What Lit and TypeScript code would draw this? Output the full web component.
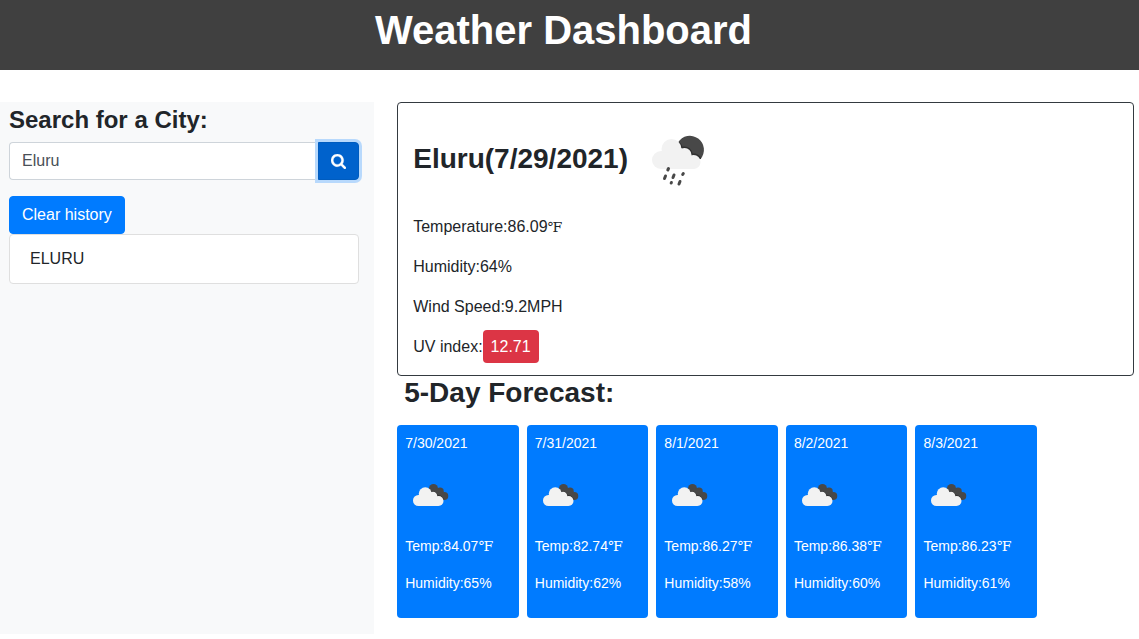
import { LitElement, html, css } from "lit";
import { customElement, property, state } from "lit/decorators.js";

interface Day {
  date: string;
  temp: string;
  humidity: string;
}

@customElement("forecast-card")
class ForecastCard extends LitElement {
  @property({ attribute: false }) day!: Day;

  static styles = css`
    :host {
      display: block;
      box-sizing: border-box;
      padding: 8px;
      border-radius: 4px;
      background: #007bff;
      color: #fff;
      font-size: 14px;
      line-height: 21px;
    }
    p {
      height: 21px;
      margin: 0 0 16px;
    }
    .date {
      margin: 0 0 16px;
      font-size: 14px;
      font-weight: 400;
    }
    .icon {
      display: block;
      width: 50px;
      height: 50px;
      margin-bottom: 16px;
    }
    .unit {
      font-family: "DejaVu Serif", serif;
      font-size: 14px;
      line-height: 1;
    }
  `;

  render() {
    return html`
      <h4 class="date">${this.day.date}</h4>
      <svg class="icon" viewBox="0 0 100 100" role="img" aria-label="Broken clouds">
        <g fill="#484848">
          <circle cx="57" cy="37" r="9" />
          <circle cx="70" cy="42.500" r="7.500" />
          <circle cx="78.500" cy="52" r="8" />
          <path d="M52 42L60 36L72 42L80 50L80 59H66Z" />
        </g>
        <path d="M52 43Q62 42 65 51Q74 50 77.500 60" fill="none" stroke="#303030" stroke-width="2" />
        <g fill="#f2f2f2">
          <circle cx="27" cy="61" r="11" />
          <circle cx="40.500" cy="47.500" r="13" />
          <circle cx="56" cy="52" r="8.500" />
          <circle cx="67" cy="62" r="10" />
          <path d="M27 50L57 48L67 72H27Z" />
        </g>
      </svg>
      <p>Temp:${this.day.temp}<span class="unit">℉</span></p>
      <p>Humidity:${this.day.humidity}</p>
    `;
  }
}

@customElement("app-root")
class AppRoot extends LitElement {
  @state() private history = ["ELURU"];

  private days: Day[] = [
    { date: "7/30/2021", temp: "84.07", humidity: "65%" },
    { date: "7/31/2021", temp: "82.74", humidity: "62%" },
    { date: "8/1/2021", temp: "86.27", humidity: "58%" },
    { date: "8/2/2021", temp: "86.38", humidity: "60%" },
    { date: "8/3/2021", temp: "86.23", humidity: "61%" },
  ];

  static styles = css`
    :host {
      display: block;
      background: #fff;
      color: #212529;
      font: 16px/24px "Liberation Sans", Arial, sans-serif;
    }
    * {
      box-sizing: border-box;
    }
    h1,
    h2,
    h3,
    p,
    ul {
      margin: 0;
    }
    .banner {
      padding: 6px 12px 16px 0;
      background: #404040;
      color: #fff;
      text-align: center;
    }
    .banner h1 {
      font-size: 40px;
      line-height: 48px;
    }
    .layout {
      display: grid;
      grid-template-columns: 33% minmax(0, 1fr);
      column-gap: 23px;
      padding: 32px 5px 0 0;
    }
    .sidebar {
      padding: 4px 15px 16px 9px;
      background: #f8f9fa;
    }
    .sidebar h2 {
      margin-bottom: 8px;
      font-size: 24px;
      line-height: 28px;
    }
    .search {
      display: flex;
      margin-bottom: 16px;
    }
    .field {
      flex: 1;
      min-width: 0;
      height: 38px;
      padding: 6px 12px;
      border: 1px solid #ced4da;
      border-right: 0;
      border-radius: 4px 0 0 4px;
      background: #fff;
      color: #495057;
      font: inherit;
    }
    .btn {
      padding: 6px 12px;
      border: 1px solid #007bff;
      border-radius: 4px;
      background: #007bff;
      color: #fff;
      font: inherit;
      cursor: pointer;
    }
    .go {
      display: flex;
      align-items: center;
      border-color: #005cbf;
      border-radius: 0 4px 4px 0;
      background: #0062cc;
      box-shadow: 0 0 0 3px #b8d9fc;
    }
    .go svg {
      display: block;
      width: 15px;
      height: 15px;
    }
    .clear {
      display: block;
    }
    .history {
      padding: 0;
      border: 1px solid #dfdfdf;
      border-radius: 4px;
      background: #fff;
      list-style: none;
    }
    .history li {
      padding: 12px 20px;
    }
    .main {
      padding-bottom: 16px;
    }
    .current {
      padding: 0 15px;
      border: 1px solid #343a40;
      border-radius: 4px;
    }
    .current p {
      height: 24px;
      margin-bottom: 16px;
    }
    .place {
      display: flex;
      align-items: center;
      height: 112px;
    }
    .place h2 {
      font-size: 28px;
      line-height: 34px;
    }
    .place svg {
      width: 100px;
      height: 100px;
    }
    .unit {
      font-family: "DejaVu Serif", serif;
      font-size: 14px;
      line-height: 1;
    }
    .uv {
      padding: 8px;
      border-radius: 4px;
      background: #dc3545;
      color: #fff;
    }
    .outlook {
      margin-bottom: 16px;
      padding-left: 7px;
      font-size: 28px;
      line-height: 33px;
    }
    .days {
      display: flex;
      gap: 8px;
    }
    .days forecast-card {
      flex: 0 0 16.5%;
    }
  `;

  render() {
    return html`
      <header class="banner"><h1>Weather Dashboard</h1></header>
      <div class="layout">
        <aside class="sidebar">
          <h2><label for="city">Search for a City:</label></h2>
          <form class="search" @submit=${(e: Event) => e.preventDefault()}>
            <input class="field" id="city" type="text" .value=${"Eluru"} />
            <button class="btn go" type="submit" aria-label="Search">
              <svg
                viewBox="64 128 1664 1664"
                fill="currentColor"
                stroke="currentColor"
                stroke-width="30"
                aria-hidden="true"
              >
                <path
                  d="M1216 832q0-185-131.500-316.500t-316.500-131.500-316.500 131.500-131.500 316.500 131.500 316.500 316.500 131.500 316.500-131.500 131.500-316.500zm512 832q0 52-38 90t-90 38q-54 0-90-38l-343-342q-179 124-399 124-143 0-273.500-55.500t-225-150-150-225-55.500-273.500 55.500-273.500 150-225 225-150 273.500-55.500 273.500 55.500 225 150 150 225 55.500 273.500q0 220-124 399l343 343q37 37 37 90z"
                />
              </svg>
            </button>
          </form>
          <button class="btn clear" type="button" @click=${() => (this.history = [])}>Clear history</button>
          <ul class="history">
            ${this.history.map((city) => html`<li>${city}</li>`)}
          </ul>
        </aside>
        <main class="main">
          <section class="current">
            <div class="place">
              <h2>Eluru(7/29/2021)</h2>
              <svg viewBox="0 1 100 100" role="img" aria-label="Rain">
                <path d="M50 34.500A14 14 0 1 1 72.500 51L60 50Z" fill="#484848" />
                <path
                  d="M50.500 34.500Q54 37 53.500 39.500Q62 38 64 46Q71 46 72.500 51"
                  fill="none"
                  stroke="#303030"
                  stroke-width="1.500"
                />
                <g fill="#f2f2f2">
                  <circle cx="33" cy="52" r="9" />
                  <circle cx="43.500" cy="41" r="10" />
                  <circle cx="56.500" cy="47" r="7" />
                  <circle cx="65.500" cy="54" r="7" />
                  <path d="M33 43L57 41L63 47L67 61H33Z" />
                </g>
                <path
                  d="M40.500 60.500L39.800 62M37.500 68L36.500 70.500M46 67L45 69.500M43.400 74.500L43.200 75M55.300 65.500L54.700 66.500M52 73.500L51 76"
                  fill="none"
                  stroke="#484848"
                  stroke-width="3"
                  stroke-linecap="round"
                />
              </svg>
            </div>
            <p>Temperature:86.09<span class="unit">℉</span></p>
            <p>Humidity:64%</p>
            <p>Wind Speed:9.2MPH</p>
            <p>UV index:<span class="uv">12.71</span></p>
          </section>
          <h3 class="outlook">5-Day Forecast:</h3>
          <div class="days">
            ${this.days.map((day) => html`<forecast-card .day=${day}></forecast-card>`)}
          </div>
        </main>
      </div>
    `;
  }
}
